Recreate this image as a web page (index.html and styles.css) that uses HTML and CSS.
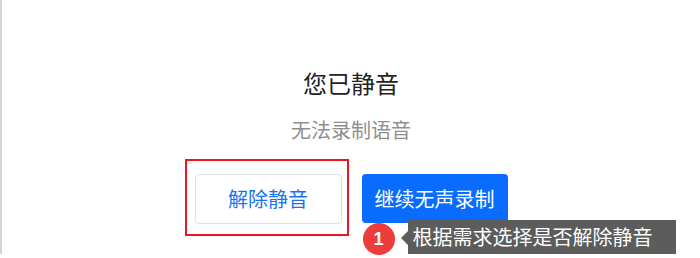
FILE: index.html
```html
<!DOCTYPE html>
<html lang="zh-CN">
<head>
<meta charset="utf-8">
<title>您已静音</title>
<link rel="stylesheet" href="styles.css">
</head>
<body>
<div class="card">
  <h1 class="title">您已静音</h1>
  <p class="subtitle">无法录制语音</p>
  <div class="actions">
    <div class="btn-wrap">
      <button class="btn btn-default">解除静音</button>
      <span class="highlight"></span>
    </div>
    <div class="btn-wrap">
      <button class="btn btn-primary">继续无声录制</button>
      <div class="callout">
        <span class="badge">1</span>
        <span class="tip">根据需求选择是否解除静音</span>
      </div>
    </div>
  </div>
</div>
</body>
</html>
```
FILE: styles.css
```css
html, body {
  margin: 0;
  padding: 0;
  background: #fff;
}
body {
  font-family: "Noto Sans CJK SC", "Noto Sans", sans-serif;
  width: 700px;
  height: 258px;
  overflow: hidden;
}
.card {
  box-sizing: border-box;
  width: 700px;
  height: 254px;
  border-left: 2px solid #d4d4d4;
  border-top-right-radius: 4px;
  display: flex;
  flex-direction: column;
  align-items: center;
  padding-top: 67px;
}
.title {
  margin: 0;
  font-size: 24px;
  line-height: 32px;
  font-weight: 400;
  color: #222;
}
.subtitle {
  margin: 19px 0 0;
  font-size: 20px;
  line-height: 24px;
  color: #8f8f8f;
}
.actions {
  display: flex;
  gap: 20px;
  margin-top: 32px;
}
.btn-wrap {
  position: relative;
}
.btn {
  box-sizing: border-box;
  height: 50px;
  font-family: inherit;
  font-size: 20px;
  line-height: 1;
  border-radius: 4px;
  display: flex;
  align-items: center;
  justify-content: center;
  cursor: pointer;
}
.btn-default {
  width: 147px;
  background: #fff;
  color: #1a73f0;
  border: 1px solid #dcdfe6;
}
.btn-primary {
  width: 146px;
  height: 49px;
  background: #0a6cff;
  color: #fff;
  border: none;
}
.highlight {
  position: absolute;
  left: -10px;
  top: -15px;
  width: 164px;
  height: 77px;
  box-sizing: border-box;
  border: 2px solid #f0141e;
}
.callout {
  position: absolute;
  left: 1px;
  top: 45px;
  display: flex;
  align-items: center;
  white-space: nowrap;
}
.badge {
  width: 32px;
  height: 32px;
  border-radius: 50%;
  background: #ee3b3b;
  color: #fff;
  font-family: "Liberation Sans", Arial, sans-serif;
  font-weight: 700;
  font-size: 18px;
  display: flex;
  align-items: center;
  justify-content: center;
  margin-top: 4px;
}
.tip {
  position: relative;
  margin-left: 13px;
  box-sizing: border-box;
  width: 268px;
  height: 34px;
  padding-left: 5px;
  background: #5c5c5c;
  color: #fff;
  font-size: 20px;
  line-height: 34px;
}
.tip::before {
  content: "";
  position: absolute;
  left: -7px;
  top: 11px;
  border-top: 7px solid transparent;
  border-bottom: 7px solid transparent;
  border-right: 7px solid #5c5c5c;
}
```
